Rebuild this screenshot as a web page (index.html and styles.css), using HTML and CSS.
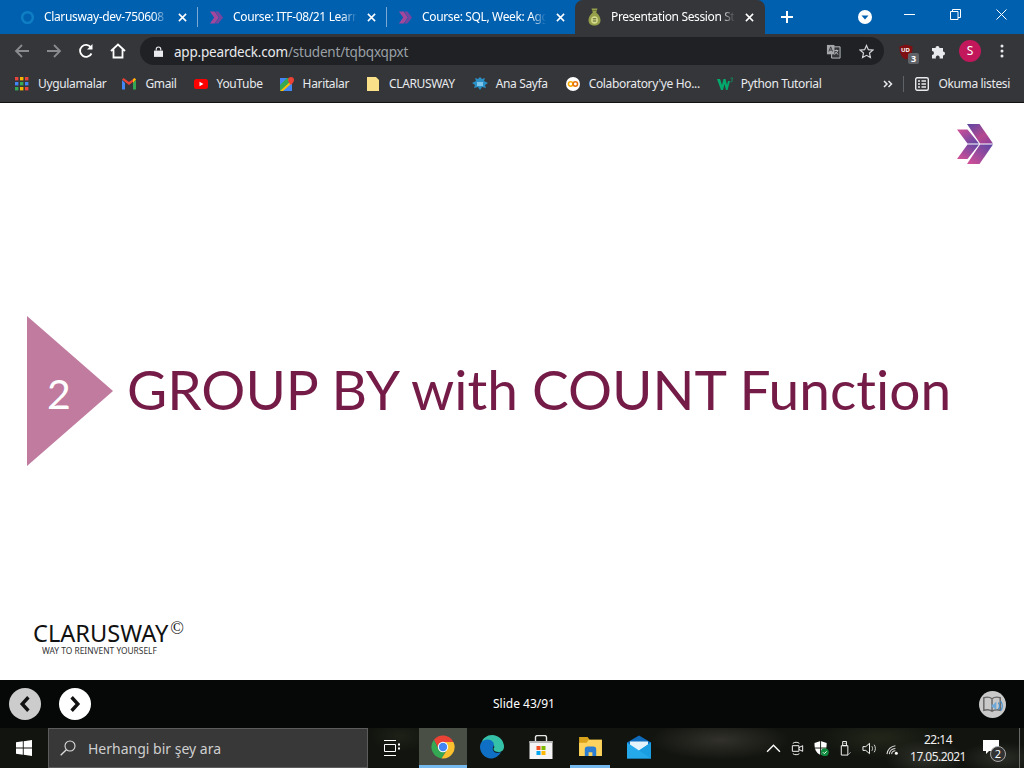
FILE: index.html
```html
<!DOCTYPE html>
<html lang="tr">
<head>
<meta charset="utf-8">
<title>Presentation Session Student</title>
<link rel="stylesheet" href="styles.css">
</head>
<body>
<div class="screen">
  <header class="tabstrip">
    <div class="tab">
      <svg class="fav" viewBox="0 0 16 16"><circle cx="8" cy="8" r="5.7" fill="none" stroke="#0f7fc4" stroke-width="2.600"/></svg>
      <span class="tab-title">Clarusway-dev-750608</span>
      <svg class="tab-x" viewBox="0 0 10 10"><path d="M1 1l8 8M9 1l-8 8"/></svg>
    </div>
    <div class="tab sep">
      <svg class="fav" viewBox="0 0 16 16"><path d="M1 1.500h5l4.500 6.500L6 14.500H1L5.500 8z" fill="#a3479c"/><path d="M6.500 1.500h3.500l5 6.500-5 6.500H6.500L11 8z" fill="#74459f"/></svg>
      <span class="tab-title">Course: ITF-08/21 Learn</span>
      <svg class="tab-x" viewBox="0 0 10 10"><path d="M1 1l8 8M9 1l-8 8"/></svg>
    </div>
    <div class="tab sep">
      <svg class="fav" viewBox="0 0 16 16"><path d="M1 1.500h5l4.500 6.500L6 14.500H1L5.500 8z" fill="#a3479c"/><path d="M6.500 1.500h3.500l5 6.500-5 6.500H6.500L11 8z" fill="#74459f"/></svg>
      <span class="tab-title">Course: SQL, Week: Agg</span>
      <svg class="tab-x" viewBox="0 0 10 10"><path d="M1 1l8 8M9 1l-8 8"/></svg>
    </div>
    <div class="tab active">
      <svg class="fav" viewBox="0 0 14 18"><path d="M4 .5h6L8.700 4.500c2.800 2 4.300 5 4.300 8 0 3-2.500 5-6 5s-6-2-6-5c0-3 1.500-6 4.300-8z" fill="#96a04a"/><path d="M4.500 2.500h5" stroke="#6c7436" stroke-width="1"/><ellipse cx="7" cy="12" rx="3.400" ry="3.800" fill="#d6db8e"/><path d="M5.300 10.800h3.400M5.300 13h3.400" stroke="#4f5a26" stroke-width="1"/></svg>
      <span class="tab-title">Presentation Session Stu</span>
      <svg class="tab-x" viewBox="0 0 10 10"><path d="M1 1l8 8M9 1l-8 8"/></svg>
    </div>
    <svg class="newtab" viewBox="0 0 12 12"><path d="M6 0v12M0 6h12"/></svg>
    <svg class="tabsearch" viewBox="0 0 14 14"><circle cx="7" cy="7" r="7" fill="#fff"/><path d="M3.500 5.500h7L7 9.500z" fill="#0060b0"/></svg>
    <div class="winctl">
      <svg viewBox="0 0 11 11"><path d="M0 5.500h11"/></svg>
      <svg viewBox="0 0 11 11"><path d="M.5 2.500h7.500v8H.5zM2.500 2.500v-2h8v8h-2.500"/></svg>
      <svg viewBox="0 0 11 11"><path d="M.5.5l10 10M10.500.5l-10 10"/></svg>
    </div>
  </header>

  <nav class="toolbar">
    <svg class="nav dim" viewBox="0 0 16 16"><path d="M15 8H2M8 2L2 8l6 6"/></svg>
    <svg class="nav dim" viewBox="0 0 16 16"><path d="M1 8h13M8 2l6 6-6 6"/></svg>
    <svg class="nav" viewBox="0 0 16 16"><path d="M13.500 10.500A6 6 0 1 1 13 4.500"/><path class="solid" d="M14.500 1v5.500H9z"/></svg>
    <svg class="nav" viewBox="0 0 16 16"><path d="M1 8l7-6.500L15 8M3.500 6.500V14.500h9V6.500"/></svg>
    <div class="omnibox">
      <svg class="lock" viewBox="0 0 10 12"><path d="M0 5h10v7H0z" fill="#e8eaed"/><path d="M2.500 5V3.500a2.500 2.500 0 0 1 5 0V5" fill="none" stroke="#e8eaed" stroke-width="1.300"/></svg>
      <span class="url"><b>app.peardeck.com</b>/student/tqbqxqpxt</span>
      <svg class="translate" viewBox="0 0 16 16"><path d="M6 3h9v12H6z" fill="#35363a" stroke="#c0c2c5"/><path d="M1 1h8v10H1z" fill="#a5a7aa"/><path d="M3 8l2-5 2 5M3.800 6.500h2.400" fill="none" stroke="#35363a" stroke-width="1"/><path d="M9 7h4M11 6v1M12.500 7c-.5 2-2 3-3.500 4M10 8.500c.7 1 2 2 3 2.500" fill="none" stroke="#c0c2c5" stroke-width="1"/></svg>
      <svg class="star" viewBox="0 0 16 16"><path d="M8 1.500l2 4.500 4.800.5-3.600 3.200 1 4.800L8 12.100l-4.200 2.400 1-4.800L1.200 6.500 6 6z"/></svg>
    </div>
    <div class="ublock">
      <svg viewBox="0 0 14 16"><path d="M7 0.500l6.500 2c0 6-1 10.500-6.500 13-5.500-2.500-6.500-7-6.500-13z" fill="#7e0f12"/></svg>
      <span class="ub">UD</span>
      <span class="badge">3</span>
    </div>
    <svg class="puzzle" viewBox="0 0 16 16"><path d="M1 5h3.500a2 2 0 1 1 4 0H12v3.500a2 2 0 1 1 0 4V15.500H8.500a2 2 0 1 0-3.500 0H1v-3.500a2 2 0 1 0 0-4z" fill="#e8eaed"/></svg>
    <div class="avatar">S</div>
    <svg class="menu" viewBox="0 0 4 14"><circle cx="2" cy="2" r="1.500"/><circle cx="2" cy="7" r="1.500"/><circle cx="2" cy="12" r="1.500"/></svg>
  </nav>

  <div class="bookmarks">
    <div class="bm bm-first"><svg class="bm-ic" viewBox="0 0 14 14"><g><rect x="0" y="0" width="3.400" height="3.400" fill="#e8453c"/><rect x="5" y="0" width="3.400" height="3.400" fill="#f4b400"/><rect x="10" y="0" width="3.400" height="3.400" fill="#e8453c"/><rect x="0" y="5" width="3.400" height="3.400" fill="#4285f4"/><rect x="5" y="5" width="3.400" height="3.400" fill="#34a853"/><rect x="10" y="5" width="3.400" height="3.400" fill="#4285f4"/><rect x="0" y="10" width="3.400" height="3.400" fill="#34a853"/><rect x="5" y="10" width="3.400" height="3.400" fill="#f4b400"/><rect x="10" y="10" width="3.400" height="3.400" fill="#e8453c"/></g></svg>Uygulamalar</div>
    <div class="bm"><svg class="bm-ic" viewBox="0 0 14 12"><path d="M0 2v9.500h3V5z" fill="#4285f4"/><path d="M14 2v9.500h-3V5z" fill="#34a853"/><path d="M0 1.500L7 7l7-5.500L12.500 0 7 4 1.500 0z" fill="#ea4335"/><path d="M11 5l3-3.500L12.500 0 11 1.200z" fill="#fbbc04"/></svg>Gmail</div>
    <div class="bm"><svg class="bm-ic" viewBox="0 0 14 10"><rect width="14" height="10" rx="2.500" fill="#f00"/><path d="M5.500 2.800L9.500 5l-4 2.200z" fill="#fff"/></svg>YouTube</div>
    <div class="bm"><svg class="bm-ic" viewBox="0 0 14 14"><path d="M0 1h12v13H0z" fill="#34a853"/><path d="M0 14L12 3v11z" fill="#fbbc04"/><path d="M3 14L12 6v8z" fill="#4285f4"/><path d="M0 1h7L0 8z" fill="#4285f4"/><path d="M11 0a3 3 0 0 1 3 3c0 2-3 5-3 5S8 5 8 3a3 3 0 0 1 3-3z" fill="#ea4335"/></svg>Haritalar</div>
    <div class="bm"><svg class="bm-ic folder" viewBox="0 0 12 14"><path d="M0 0h9l3 3v11H0z" fill="#fbe08a"/></svg>CLARUSWAY</div>
    <div class="bm"><svg class="bm-ic wide" viewBox="0 0 16 14"><path d="M8 0l2 2 3-1-1 3 4 2-3 2 1 3-4-1-2 3-2-3-4 1 1-3-3-2 4-2-1-3 3 1z" fill="#2a8fc4"/><path d="M5 5h6v4H5z" fill="#7cc4ea"/></svg>Ana Sayfa</div>
    <div class="bm"><svg class="bm-ic wide" viewBox="0 0 16 16"><circle cx="8" cy="8" r="8" fill="#fff"/><circle cx="5.300" cy="8" r="2.500" fill="none" stroke="#f9ab00" stroke-width="1.800"/><circle cx="10.700" cy="8" r="2.500" fill="none" stroke="#e8710a" stroke-width="1.800"/></svg>Colaboratory'ye Ho...</div>
    <div class="bm"><svg class="bm-ic wide" viewBox="0 0 16 12"><path d="M0 1h3l2 6 1.500-6h2L10 7l1-4h2l-2.500 9H9L7.500 6 6 12H4z" fill="#04aa6d"/><path d="M13.500 0h2v1l-1 1 1 1-1 1h-1" fill="none" stroke="#04aa6d" stroke-width=".7"/></svg>Python Tutorial</div>
    <div class="bm-end">
      <svg class="more" viewBox="0 0 10 8"><path d="M1 1l3 3-3 3M5.500 1l3 3-3 3"/></svg>
      <span class="bm-sep"></span>
      <div class="bm"><svg class="bm-ic" viewBox="0 0 14 14"><rect x=".7" y=".7" width="12.600" height="12.600" rx="1.500" fill="none" stroke="#e8eaed" stroke-width="1.400"/><path d="M3 4h2M6.500 4H11M3 7h2M6.500 7H11M3 10h2M6.500 10H11" stroke="#e8eaed" stroke-width="1.300"/></svg>Okuma listesi</div>
    </div>
  </div>

  <main class="slide">
    <svg class="brand" viewBox="0 0 36 40">
      <defs>
        <linearGradient id="chevA" x1="0" y1="0" x2="1" y2="1">
          <stop offset="0" stop-color="#d24f97"/>
          <stop offset="1" stop-color="#5c46a4"/>
        </linearGradient>
        <linearGradient id="chevB" x1="1" y1="0" x2="0" y2="1">
          <stop offset="0" stop-color="#5c46a4"/>
          <stop offset="1" stop-color="#d64f96"/>
        </linearGradient>
        <linearGradient id="chevC" x1="0" y1="0" x2="1" y2="1">
          <stop offset="0" stop-color="#5c46a4"/>
          <stop offset=".6" stop-color="#b5498f"/>
          <stop offset="1" stop-color="#8a3f9e"/>
        </linearGradient>
      </defs>
      <path d="M0 5.500h10.500L22 19.500H10.500z" fill="url(#chevA)"/>
      <path d="M10.500 20.500H22L10.500 35H0z" fill="url(#chevB)"/>
      <path d="M10 0h12.500L36 19.500H23z" fill="url(#chevC)"/>
      <path d="M23 20.500h13L22.500 40H10z" fill="url(#chevB)"/>
    </svg>
    <section class="hero">
      <div class="tri"><span class="num">2</span></div>
      <h1 class="title">GROUP BY with COUNT Function</h1>
    </section>
    <footer class="logo">
      <div class="logo-name">CLARUSWAY<sup class="copy">©</sup></div>
      <div class="logo-tag">WAY TO REINVENT YOURSELF</div>
    </footer>
  </main>

  <div class="deckbar">
    <div class="round grey"><svg viewBox="0 0 10 16"><path d="M8 2L2.500 8 8 14"/></svg></div>
    <div class="round white"><svg viewBox="0 0 10 16"><path d="M2 2l5.500 6L2 14"/></svg></div>
    <div class="slide-no">Slide 43/91</div>
    <div class="audio">
      <svg viewBox="0 0 28 28"><path d="M5 7c3-1 6-1 8.500 1 2.500-2 5.500-2 8.500-1v13c-3-1-6-1-8.500 1-2.500-2-5.500-2-8.500-1zM13.500 8v13" fill="none" stroke="#666" stroke-width="1.500"/><path d="M13 14h2l3-3v9l-3-3h-2z" fill="#6fa8d6"/><path d="M20 12c1.500 2 1.500 5 0 7M22.500 10.500c2 3 2 7 0 10" fill="none" stroke="#4a90cc" stroke-width="1.300"/></svg>
    </div>
  </div>

  <footer class="taskbar">
    <svg class="start" viewBox="0 0 16 16"><path d="M0 2.300L6.800 1.300V7.500H0zM7.700 1.200L16 0V7.500H7.700zM0 8.400H6.800V14.700L0 13.700zM7.700 8.400H16V16L7.700 14.800z" fill="#fff"/></svg>
    <div class="search">
      <svg class="mag" viewBox="0 0 16 16"><circle cx="10" cy="6" r="5" fill="none" stroke="#ddd" stroke-width="1.100"/><path d="M6.300 9.700L.7 15.300" stroke="#ddd" stroke-width="1.300"/></svg>
      <span>Herhangi bir şey ara</span>
    </div>
    <svg class="taskview" viewBox="0 0 16 16"><path d="M0 .5h12M0 15.500h12M.5 4.500h11v7H.5z" fill="none" stroke="#fff"/><path d="M14 3.500h2v2h-2zM14 7.500h2v2h-2z" fill="#fff"/></svg>
    <div class="app app-on">
      <svg viewBox="0 0 24 24"><path d="M12 7H22.400A11.500 11.500 0 0 0 3 4.800L7.700 14.500A5 5 0 0 1 12 7z" fill="#ea4335"/><path d="M3 4.800A11.500 11.500 0 0 0 10.500 23.400L15.700 15A5 5 0 0 1 7.700 14.500z" fill="#34a853"/><path d="M22.400 7A11.500 11.500 0 0 1 10.500 23.400L16.300 14.500A5 5 0 0 0 12 7z" fill="#fbc02d"/><circle cx="12" cy="12" r="5.200" fill="#fff"/><circle cx="12" cy="12" r="4.200" fill="#4285f4"/></svg>
    </div>
    <div class="app">
      <svg viewBox="0 0 24 24"><path d="M12 0a12 12 0 0 1 12 12c0 3-2.500 5-5.500 5-3 0-5-1-5-3 0-1 .5-1.500 1-2C13 8 9 6 6 8 3 10 3 13 3 15 .5 11 1 5 5 2.500 7 .8 9.500 0 12 0z" fill="#35c1a8"/><path d="M1 8c2-4 9-5 12-1 1 1 1 3 .5 4.500-.5 1-1 2-.5 3.500 1 3 5 3.500 8 2-2 4-6 6.500-10 6.500C5 23.500 0 18 0 12c0-1.500.5-3 1-4z" fill="#0f6fc4"/></svg>
    </div>
    <div class="app">
      <svg viewBox="0 0 24 24"><path d="M.5 6h23v18H.5z" fill="#f4f4f4"/><path d="M.5 6h23v2H.5z" fill="#b8b8b8"/><path d="M6.500 6V2.500a2 2 0 0 1 2-2h7a2 2 0 0 1 2 2V6" fill="none" stroke="#e6e6e6" stroke-width="1.400"/><rect x="7.500" y="11" width="4" height="4" fill="#f25022"/><rect x="12.500" y="11" width="4" height="4" fill="#7fba00"/><rect x="7.500" y="16" width="4" height="4" fill="#00a4ef"/><rect x="12.500" y="16" width="4" height="4" fill="#ffb900"/></svg>
    </div>
    <div class="app app-open">
      <svg viewBox="0 0 24 20"><path d="M0 0h9l2 3h13v17H0z" fill="#d9a21c"/><path d="M0 6h8l2-3h14v17H0z" fill="#fbd35e"/><path d="M6 13a3 3 0 0 1 3-3h6a3 3 0 0 1 3 3v7h-4v-4h-4v4H6z" fill="#2b7cd3"/></svg>
    </div>
    <div class="app">
      <svg viewBox="0 0 24 23"><path d="M12 0L0 7v16h24V7z" fill="#0f6cbd"/><path d="M3 6h18v7l-9 6-9-6z" fill="#e4f3fb"/><path d="M0 7v16h24V7l-12 8z" fill="#25a9eb"/><path d="M24 7v16L12 15z" fill="#1b9de2"/></svg>
    </div>
    <div class="tray">
      <svg class="t-ic" viewBox="0 0 14 14"><path d="M1 10l6-6 6 6" fill="none" stroke="#fff" stroke-width="1.300"/></svg>
      <svg class="t-ic" viewBox="0 0 14 16"><path d="M1.500 5h7v6h-7zM8.500 7l4-2v6l-4-2" fill="none" stroke="#fff"/><path d="M2 2.500c2-1.500 5-1.500 7 0M2 13.500c2 1.500 5 1.500 7 0" fill="none" stroke="#fff"/></svg>
      <svg class="t-ic" viewBox="0 0 16 16"><path d="M7 0l6.500 2c0 6-1 10-6.500 13C1.500 12 .5 8 .5 2z" fill="#fff"/><path d="M7 0v15M.5 7.500h13" stroke="#15170f" stroke-width="1"/><circle cx="11.500" cy="12" r="4.200" fill="#10893e"/><path d="M9.500 12l1.500 1.500 2.500-2.500" fill="none" stroke="#fff"/></svg>
      <svg class="t-ic" viewBox="0 0 12 16"><path d="M1.500 5h7v10h-7zM3 .5h4v4.500H3z" fill="none" stroke="#fff"/><path d="M4.200 2.500h.6M5.400 2.500h.6" stroke="#fff"/><path d="M8 15.500l3.500-3.500" stroke="#aaa"/></svg>
      <svg class="t-ic" viewBox="0 0 16 14"><path d="M1 5h3l4-3.500v11L4 9H1z" fill="none" stroke="#fff"/><path d="M10.500 4.500c1 1.500 1 3.500 0 5M13 3c1.700 2.500 1.700 5.500 0 8" fill="none" stroke="#ddd"/></svg>
      <svg class="t-ic" viewBox="0 0 16 14"><path d="M1 13a10 10 0 0 1 9-9M3.500 13a7 7 0 0 1 6.500-6M6 13a4 4 0 0 1 4-3.500" fill="none" stroke="#ddd" stroke-width="1.100"/><circle cx="11" cy="12" r="1.600" fill="#fff"/></svg>
    </div>
    <div class="clock"><span>22:14</span><span>17.05.2021</span></div>
    <div class="notify">
      <svg viewBox="0 0 16 14"><path d="M0 0h16v11H6l-3 3v-3H0z" fill="#fff"/></svg>
      <span class="notify-n">2</span>
    </div>
    <div class="show-desktop"></div>
  </footer>
</div>
</body>
</html>
```
FILE: styles.css
```css
* { box-sizing: border-box; }
html, body { margin: 0; height: 100%; overflow: hidden; }
body { font-family: "Noto Sans", "Open Sans", sans-serif; }
.screen { width: 1024px; height: 768px; display: flex; flex-direction: column; background: #fff; }

/* tab strip */
.tabstrip { height: 34px; background: #0060b0; display: flex; align-items: stretch; padding-left: 8px; color: #fff; }
.tab { width: 189px; display: flex; align-items: center; padding: 0 9px 0 12px; font-size: 12px; letter-spacing: -.35px; position: relative; }
.tab.sep::before { content: ""; position: absolute; left: 0; top: 7px; bottom: 7px; width: 1px; background: #7aa8d2; }
.tab.active { background: #35363a; border-radius: 8px 8px 0 0; width: 190px; padding-right: 10px; }
.fav { width: 15px; height: 15px; flex: none; margin-right: 9px; }
.tab.active .fav { height: 18px; margin-bottom: 1px; }
.tab-title { flex: 1; min-width: 0; line-height: 16px; padding-bottom: 1px; white-space: nowrap; overflow: hidden; color: #fff; -webkit-mask-image: linear-gradient(90deg, #000 88%, transparent); mask-image: linear-gradient(90deg, #000 88%, transparent); }
.tab-x { width: 9px; height: 9px; flex: none; margin: 0 1px 0 10px; stroke: #fff; stroke-width: 1.700; fill: none; }
.newtab { width: 12px; height: 12px; align-self: center; margin-left: 16px; stroke: #fff; stroke-width: 2; fill: none; }
.tabsearch { width: 14px; height: 14px; align-self: center; margin-left: 65px; }
.winctl { margin-left: auto; display: flex; align-items: center; gap: 35px; padding: 0 17px 6px 0; }
.winctl svg { width: 11px; height: 11px; stroke: #fff; stroke-width: 1; fill: none; }

/* toolbar */
.toolbar { height: 34px; background: #35363a; display: flex; align-items: center; padding-left: 14px; }
.nav { width: 16px; height: 16px; flex: none; margin-right: 16px; stroke: #fff; stroke-width: 1.800; fill: none; }
.nav.dim { stroke: #8a8b8e; }
.nav .solid { fill: #fff; stroke: none; }
.omnibox { width: 744px; height: 28px; margin-left: -2px; border-radius: 14px; background: #202124; display: flex; align-items: center; padding: 0 10px 0 14px; }
.lock { width: 9px; height: 11px; flex: none; }
.url { margin-left: 11px; padding-top: 1px; font-size: 13.500px; letter-spacing: -.2px; color: #9aa0a6; white-space: nowrap; }
.url b { font-weight: 400; color: #e8eaed; }
.translate { width: 15px; height: 15px; margin-left: auto; flex: none; }
.star { width: 15px; height: 15px; margin-left: 18px; flex: none; stroke: #d0d2d5; stroke-width: 1.300; fill: none; }
.ublock { width: 16px; height: 16px; margin: 2px 0 0 15px; position: relative; flex: none; }
.ublock svg { display: block; width: 14px; height: 16px; }
.ub { position: absolute; left: 2px; top: 2px; font-size: 6px; line-height: 8px; font-weight: 700; color: #fff; }
.badge { position: absolute; left: 9px; top: 9px; width: 11px; height: 11px; border-radius: 2px; background: #5f6368; color: #fff; font-size: 9px; line-height: 11px; text-align: center; font-weight: 700; }
.puzzle { width: 16px; height: 16px; margin-left: 16px; flex: none; }
.avatar { width: 22px; height: 22px; margin-left: 12px; border-radius: 50%; background: #c2185b; color: #fff; font-size: 12px; line-height: 22px; text-align: center; flex: none; }
.menu { width: 4px; height: 14px; margin-left: 19px; fill: #e8eaed; flex: none; }

/* bookmarks */
.bookmarks { height: 35px; background: #35363a; border-bottom: 1px solid #111; display: flex; align-items: center; padding: 0 0 2px 15px; gap: 17px; }
.bm { display: flex; align-items: center; font-size: 12px; letter-spacing: -.35px; line-height: 16px; color: #e8eaed; white-space: nowrap; }
.bm-first { margin-right: -1px; }
.bm-ic { width: 14px; height: 14px; margin-right: 9px; flex: none; }
.bm-ic.wide { width: 16px; margin-right: 8px; }
.bm-end { margin-left: auto; display: flex; align-items: center; padding-right: 14px; }
.more { width: 10px; height: 8px; stroke: #e8eaed; stroke-width: 1.500; fill: none; }
.bm-sep { width: 1px; height: 16px; background: #5f6368; margin: 0 11px 0 10px; }

/* slide */
.slide { flex: 1; background: #fff; display: flex; flex-direction: column; min-height: 0; padding: 21px 31px 24px 27px; }
.brand { width: 36px; height: 40px; align-self: flex-end; flex: none; }
.hero { display: flex; align-items: center; margin-top: 152px; gap: 14px; }
.tri { width: 86px; height: 150px; background: #c07b9f; clip-path: polygon(0 0, 100% 50%, 0 100%); display: flex; align-items: center; padding: 5px 0 0 20px; flex: none; }
.num { font-family: "Lato", sans-serif; font-size: 41px; color: #fff; line-height: 1; }
.title { margin: 0 0 3px; font-family: "Lato", sans-serif; font-weight: 400; font-size: 55.060px; line-height: 1; font-variant-ligatures: none; color: #741b47; white-space: nowrap; }
.logo { margin-top: auto; padding-left: 6px; color: #111; }
.logo-name { font-size: 23.600px; line-height: 26px; font-family: "Noto Sans", sans-serif; }
.copy { font-family: "Liberation Serif", serif; font-size: 18px; line-height: 0; vertical-align: 8px; margin-left: 2px; }
.logo-tag { font-size: 8.400px; line-height: 10px; padding-left: 9px; color: #333; font-family: "Noto Sans", sans-serif; }

/* deck bar */
.deckbar { height: 48px; background: #060808; display: flex; align-items: center; padding: 0 18px 0 9px; position: relative; color: #fff; }
.round { width: 32px; height: 32px; border-radius: 50%; display: flex; align-items: center; justify-content: center; flex: none; margin-right: 18px; }
.round svg { width: 12px; height: 18px; fill: none; stroke: #111; stroke-width: 3; }
.grey { background: #cccccc; }
.white { background: #fff; }
.slide-no { position: absolute; left: 0; right: 0; text-align: center; font-size: 12px; line-height: 16px; padding: 0 0 1px 24px; }
.audio { margin-left: auto; width: 27px; height: 27px; border-radius: 50%; background: #c9c9c9; flex: none; }
.audio svg { display: block; width: 27px; height: 27px; }

/* taskbar */
.taskbar { height: 40px; display: flex; align-items: center; padding-left: 16px; color: #fff;
  background:
    radial-gradient(ellipse 70px 20px at 720px 12px, rgba(110,105,95,.35), transparent),
    radial-gradient(ellipse 40px 18px at 925px 30px, rgba(120,120,110,.3), transparent),
    radial-gradient(ellipse 40px 16px at 1000px 30px, rgba(120,120,110,.25), transparent),
    radial-gradient(ellipse 60px 20px at 880px 10px, rgba(70,80,50,.3), transparent),
    radial-gradient(ellipse 30px 16px at 400px 8px, rgba(60,70,45,.25), transparent),
    #12140f; }
.start { width: 16px; height: 16px; flex: none; }
.search { width: 320px; height: 40px; margin-left: 16px; background: #383838; border: 1px solid #5c5c5c; display: flex; align-items: center; padding-left: 11px; font-size: 14px; color: #cfcfcf; flex: none; }
.mag { width: 16px; height: 16px; margin-right: 12px; flex: none; }
.taskview { width: 16px; height: 16px; margin-left: 16px; margin-right: 19px; flex: none; }
.app { width: 48px; height: 40px; margin-right: 1px; display: flex; align-items: center; justify-content: center; flex: none; border-bottom: 3px solid transparent; }
.app svg { width: 24px; height: 24px; }
.app-on { background: #4a4f46; border-bottom-color: #76b9ed; }
.app-open { border-bottom: 0; padding-bottom: 3px; background: linear-gradient(#0000 37px, #76b9ed 37px) no-repeat center / 40px 100%; }
.app-open svg { width: 23px; height: 19px; }
.tray { margin-left: 102px; display: flex; align-items: center; gap: 9px; }
.t-ic { width: 15px; height: 15px; flex: none; }
.clock { margin-left: 7px; width: 60px; display: flex; flex-direction: column; align-items: center; font-size: 12px; line-height: 17px; letter-spacing: -.55px; color: #f0f0f0; }
.notify { margin-left: 15px; position: relative; width: 16px; height: 14px; margin-bottom: 3px; }
.notify svg { display: block; width: 16px; height: 14px; }
.notify-n { position: absolute; left: 7px; top: 6px; width: 16px; height: 16px; border-radius: 50%; background: #333; border: 1px solid #aaa; font-size: 11px; line-height: 14px; text-align: center; color: #fff; }
.show-desktop { margin-left: auto; width: 5px; height: 40px; border-left: 1px solid #6a6a6a; flex: none; }
```
